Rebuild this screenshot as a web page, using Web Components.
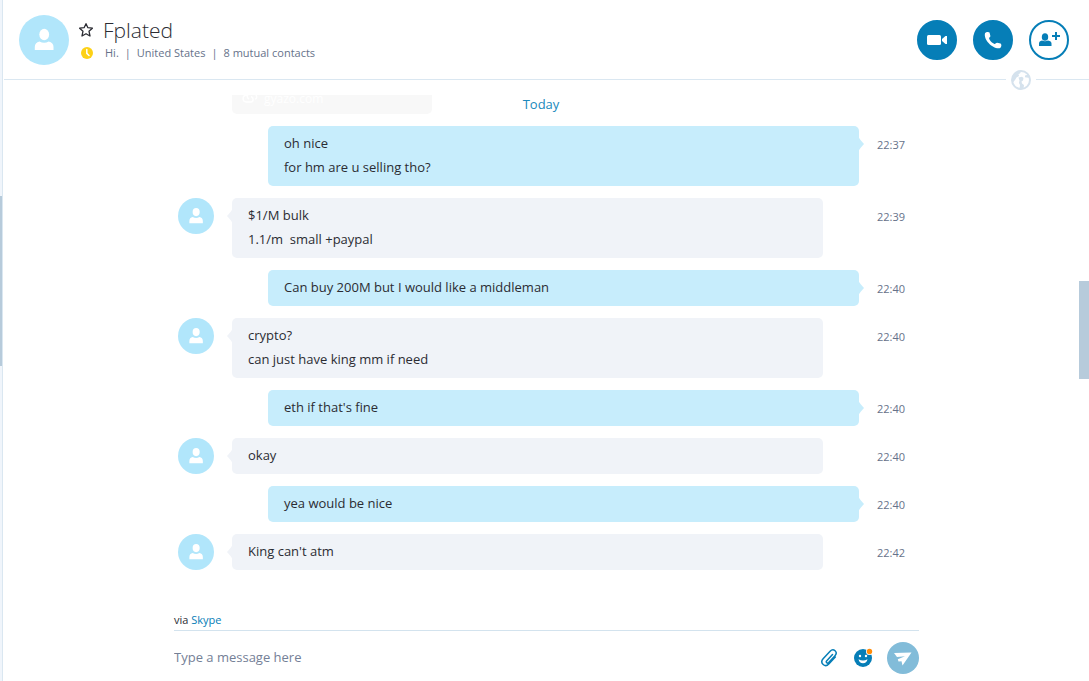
<!DOCTYPE html>
<html lang="en">
<head>
<meta charset="utf-8">
<title>Conversation with Fplated</title>
<style>
  html, body { height: 100%; margin: 0; }
  body {
    background: #fff;
    font-family: "Open Sans", "Noto Sans", sans-serif;
    --blue: #067eb7;
    --line: #dae7f1;
    --thumb: #b7cbdb;
    --ink: #2b2c33;
    --muted: #66728a;
    --person: #b1e6fb;
    color: var(--ink);
  }
</style>
</head>
<body>
<chat-app></chat-app>
<script>
const define = (name, html, setup) => {
  const template = document.createElement('template');
  template.innerHTML = html;
  customElements.define(name, class extends HTMLElement {
    constructor() {
      super();
      this.attachShadow({ mode: 'open' }).append(template.content.cloneNode(true));
    }
    connectedCallback() { if (setup) setup(this, this.shadowRoot); }
  });
};

define('person-avatar', `
<style>
  :host { display: block; flex: none; width: 36px; height: 36px; }
  :host([large]) { width: 50px; height: 50px; }
  svg { display: block; width: 100%; height: 100%; }
</style>
<svg viewBox="0 0 50 50" aria-hidden="true">
  <circle cx="25" cy="25" r="25" fill="var(--person)"/>
  <ellipse cx="25.200" cy="19.500" rx="4.900" ry="5.700" fill="#fff"/>
  <path d="M15.800 35v-3q0-4.500 4.700-5.500 4.700 2.500 9.200 0 4.800 1 4.800 5.500v3z" fill="#fff"/>
</svg>`);

define('round-button', `
<style>
  :host { display: block; }
  button { display: grid; place-items: center; box-sizing: border-box; width: 40px; height: 40px; padding: 0;
    border: 2px solid var(--blue); border-radius: 50%; background: var(--blue); color: #fff; }
  :host([outline]) button { background: #fff; color: var(--blue); }
  :host([send]) button { width: 32px; height: 32px; border: 0; background: #82bcd9; }
</style>
<button type="button"><slot></slot></button>`, (host, root) => {
  root.querySelector('button').setAttribute('aria-label', host.getAttribute('label'));
});

define('chat-header', `
<style>
  :host { display: flex; align-items: center; position: relative; height: 79px; padding: 0 20px 0 15px;
    border-bottom: 1px solid var(--line); margin-left: 1px; }
  .info { flex: 1; display: grid; grid-template-columns: 14px 1fr; column-gap: 10px; align-items: center; margin-left: 10px; }
  h1 { margin: 0; font-size: 21px; line-height: 26px; font-weight: 300; }
  .star { padding: 0; border: 0; background: none; width: 14px; height: 14px; color: var(--ink); }
  svg { display: block; }
  .clock { justify-self: end; }
  .facts { display: flex; gap: 6px; padding-left: 2px; font-size: 11px; line-height: 20px; color: var(--muted); }
  .actions { display: flex; gap: 16px; }
  .globe { position: absolute; right: 53px; bottom: -11px; padding: 0 5px; background: #fff; }
</style>
<person-avatar large></person-avatar>
<div class="info">
  <button class="star" type="button" aria-label="Add to favourites">
    <svg width="14" height="14" viewBox="0 0 14 14"><path d="M7 .7 8.900 4.700l4.500.5-3.400 3 1 4.800L7 10.700 3 13l1-4.800-3.400-3 4.500-.5z" fill="none" stroke="currentColor" stroke-width="1.300" stroke-linejoin="round"/></svg>
  </button>
  <h1>Fplated</h1>
  <svg class="clock" width="12" height="12" viewBox="0 0 12 12" role="img" aria-label="Away"><circle cx="6" cy="6" r="6" fill="#fdd116"/><path d="M5.800 2.600v3.800l2.200 2.100" fill="none" stroke="#fff" stroke-width="1.500" stroke-linecap="round"/></svg>
  <div class="facts"><span>Hi.</span><span>|</span><span>United States</span><span>|</span><span>8 mutual contacts</span></div>
</div>
<div class="actions">
  <round-button label="Video call">
    <svg width="22" height="14" viewBox="0 0 22 14" fill="#fff"><rect x="1" y="2" width="14" height="10" rx="1.500"/><path d="M16 6 19.500 3H21v8h-1.500L16 8z"/></svg>
  </round-button>
  <round-button label="Call">
    <svg width="20" height="20" viewBox="0 0 20 20" fill="#fff"><path d="M2 3.200C2.800 1.900 5.800 1.400 6.500 2.600L7.400 6c.1 1-1.500 1.600-1.300 2.500.5 2 3.300 4.800 5.400 5.400 1 .2 1.600-1.300 2.600-1.200l3.500.9c1.300.8.900 3.700-.4 4.500C10.500 19.900.2 9.700 2 3.200z"/></svg>
  </round-button>
  <round-button outline label="Add people">
    <svg width="24" height="18" viewBox="0 0 24 18" fill="currentColor"><ellipse cx="8" cy="6" rx="3.200" ry="3.800"/><path d="M2 15v-2.500q0-2.500 3-3 3 1.500 6 0 3.500.5 3.500 3V15zM18 1h2v3h3v2h-3v3h-2V6h-3V4h3z"/></svg>
  </round-button>
</div>
<div class="globe">
  <svg width="20" height="20" viewBox="0 0 20 20" role="img" aria-label="Translator"><circle cx="10" cy="10" r="9" fill="#fff" stroke="#d5e2ed" stroke-width="2"/><path d="M1 9Q2 3 8 1l2 .5L9 3.500 7.500 4 8 6 5.500 7.500 4 10 2 12.500zM7.500 7.500l3.500-.8 1.500 1.300-.5 2.500-1.500 1 .5 2 2 1.500-.5 4-4 .5.500-4.500-1-2 .500-2.500zM14 5.500l3.500-1 2 4-2-.8-3.500-.5z" fill="#d5e2ed"/></svg>
</div>`);

define('chat-message', `
<style>
  :host { display: flex; align-items: flex-start; margin-bottom: 12px; }
  .side { flex: none; width: 54px; }
  .bubble { position: relative; flex: 1; box-sizing: border-box; min-height: 36px; padding: 5px 16px 7px; border-radius: 5px;
    background: var(--fill); font-size: 13px; line-height: 24px; margin-right: 36px; }
  .tail { position: absolute; top: 10px; left: -5px; fill: var(--fill); }
  time { flex: none; width: 45px; box-sizing: border-box; padding: 8px 0 0 18px; font-size: 11px; line-height: 22px; color: var(--muted); }
  :host { --fill: #f0f3f8; }
  :host([own]) { --fill: #c7edfc; }
  :host([own]) .side { width: 90px; }
  :host([own]) .bubble { margin-right: 0; }
  :host([own]) person-avatar { display: none; }
  :host([own]) .tail { left: auto; right: -5px; transform: scaleX(-1); }
  ::slotted(p) { margin: 0; white-space: pre-wrap; }
</style>
<div class="side"><person-avatar></person-avatar></div>
<div class="bubble"><svg class="tail" width="6" height="16" viewBox="0 0 6 16"><path d="M6 0Q5 2 3.500 4L0 8l3.500 4Q5 14 6 16z"/></svg><slot></slot></div>
<time></time>`, (host, root) => {
  root.querySelector('time').textContent = host.getAttribute('time');
});

define('link-preview', `
<style>
  :host { display: flex; align-items: flex-start; gap: 6px; box-sizing: border-box; width: 200px; height: 19px; margin-left: 54px; padding: 0 10px;
    border-radius: 0 0 5px 5px; background: #f8f8f8; color: #fff; font-size: 12px; line-height: 8px; }
  svg { flex: none; }
</style>
<svg width="16" height="8" viewBox="0 0 16 8" fill="none" stroke="#fff" stroke-width="1.500" aria-hidden="true"><path d="M5 0C0 0 0 7 4 7h4c4 0 4-4 1-5.500M7 4C5 3 5 1 6 0M13 4c2 0 2-2 1-4"/></svg>
<span>gyazo.com</span>`);

define('message-list', `
<style>
  :host { display: flex; flex: 1; }
  .thread { position: relative; flex: 1; min-width: 0; margin-top: 15px; padding: 0 175px; }
  .day { position: absolute; top: 0; left: 0; right: 0; margin: 0; text-align: center; font-size: 13px; line-height: 18px; font-weight: 400; color: #2089bc; }
  .track { display: flex; flex-direction: column; width: 10px; }
  .track::before { content: ""; flex: 201; }
  .thumb { flex: 98; background: var(--thumb); }
  .track::after { content: ""; flex: 233; }
  link-preview { margin-bottom: 12px; }
  @media (max-width: 800px) { .thread { padding: 0 20px; } }
</style>
<div class="thread">
  <h2 class="day">Today</h2>
  <link-preview></link-preview>
  <chat-message own time="22:37"><p>oh nice</p><p>for hm are u selling tho?</p></chat-message>
  <chat-message time="22:39"><p>$1/M bulk</p><p>1.1/m  small +paypal</p></chat-message>
  <chat-message own time="22:40"><p>Can buy 200M but I would like a middleman</p></chat-message>
  <chat-message time="22:40"><p>crypto?</p><p>can just have king mm if need</p></chat-message>
  <chat-message own time="22:40"><p>eth if that's fine</p></chat-message>
  <chat-message time="22:40"><p>okay</p></chat-message>
  <chat-message own time="22:40"><p>yea would be nice</p></chat-message>
  <chat-message time="22:42"><p>King can't atm</p></chat-message>
</div>
<div class="track"><div class="thumb"></div></div>`);

define('message-composer', `
<style>
  :host { display: block; padding: 0 170px 7px 171px; }
  .via { padding-bottom: 2px; border-bottom: 1px solid #d3e3ee; font-size: 11px; line-height: 16px; }
  a { color: var(--blue); text-decoration: none; }
  .row { display: flex; align-items: center; padding-top: 11px; }
  input { flex: 1; min-width: 0; padding: 0 0 2px; border: 0; outline: 0; font: inherit; font-size: 13px; line-height: 20px; color: var(--ink); background: none; }
  input::placeholder { color: #748096; opacity: 1; }
  .tool { padding: 0; border: 0; background: none; margin-right: 14px; color: var(--blue); }
  svg { display: block; }
  @media (max-width: 800px) { :host { padding: 0 20px 7px; } }
</style>
<div class="via">via <a href="#skype">Skype</a></div>
<div class="row">
  <input type="text" placeholder="Type a message here" aria-label="Message">
  <button class="tool" type="button" aria-label="Attach a file">
    <svg width="20" height="20" viewBox="0 0 20 20"><path d="M13.500 6.500 7.800 12.700c-1.400 1.600.5 3.200 1.900 1.800l6.300-6.800c3.300-3.700-1.500-8-4.900-4.500l-7 7.600c-3.700 4.300 2 9.200 5.700 5.200l6.500-7" fill="none" stroke="currentColor" stroke-width="1.500" stroke-linecap="round"/></svg>
  </button>
  <button class="tool" type="button" aria-label="Emoji">
    <svg width="20" height="20" viewBox="0 0 20 20"><circle cx="10" cy="10" r="9" fill="currentColor"/><circle cx="7" cy="8" r="1.200" fill="#fff"/><circle cx="13" cy="8" r="1.200" fill="#fff"/><path d="M5.500 11.300q4.500 2.600 9 0-.8 4-4.500 4t-4.500-4z" fill="#fff"/><circle cx="16.500" cy="3.500" r="3.500" fill="#fff"/><circle cx="16.500" cy="3.500" r="2.700" fill="#ff8c0a"/></svg>
  </button>
  <round-button send label="Send">
    <svg width="18" height="16" viewBox="0 0 18 16" fill="#fff"><path d="M0 3 17.500 2.500 8.500 15.500 7.500 11.200 4.500 11.500 3.800 9.200 11 6.300 3 7z"/></svg>
  </round-button>
</div>`);

define('chat-app', `
<style>
  :host { display: flex; min-height: 100vh; }
  .rail { display: flex; flex-direction: column; box-sizing: border-box; width: 3px; background: #f0f5fb; border-right: 1px solid var(--line); }
  .rail::before { content: ""; flex: 196; }
  .rail i { flex: 170; background: var(--thumb); }
  .rail::after { content: ""; flex: 315; }
  main { display: flex; flex-direction: column; flex: 1; min-width: 0; }
</style>
<div class="rail"><i></i></div>
<main>
  <chat-header></chat-header>
  <message-list></message-list>
  <message-composer></message-composer>
</main>`);
</script>
</body>
</html>
